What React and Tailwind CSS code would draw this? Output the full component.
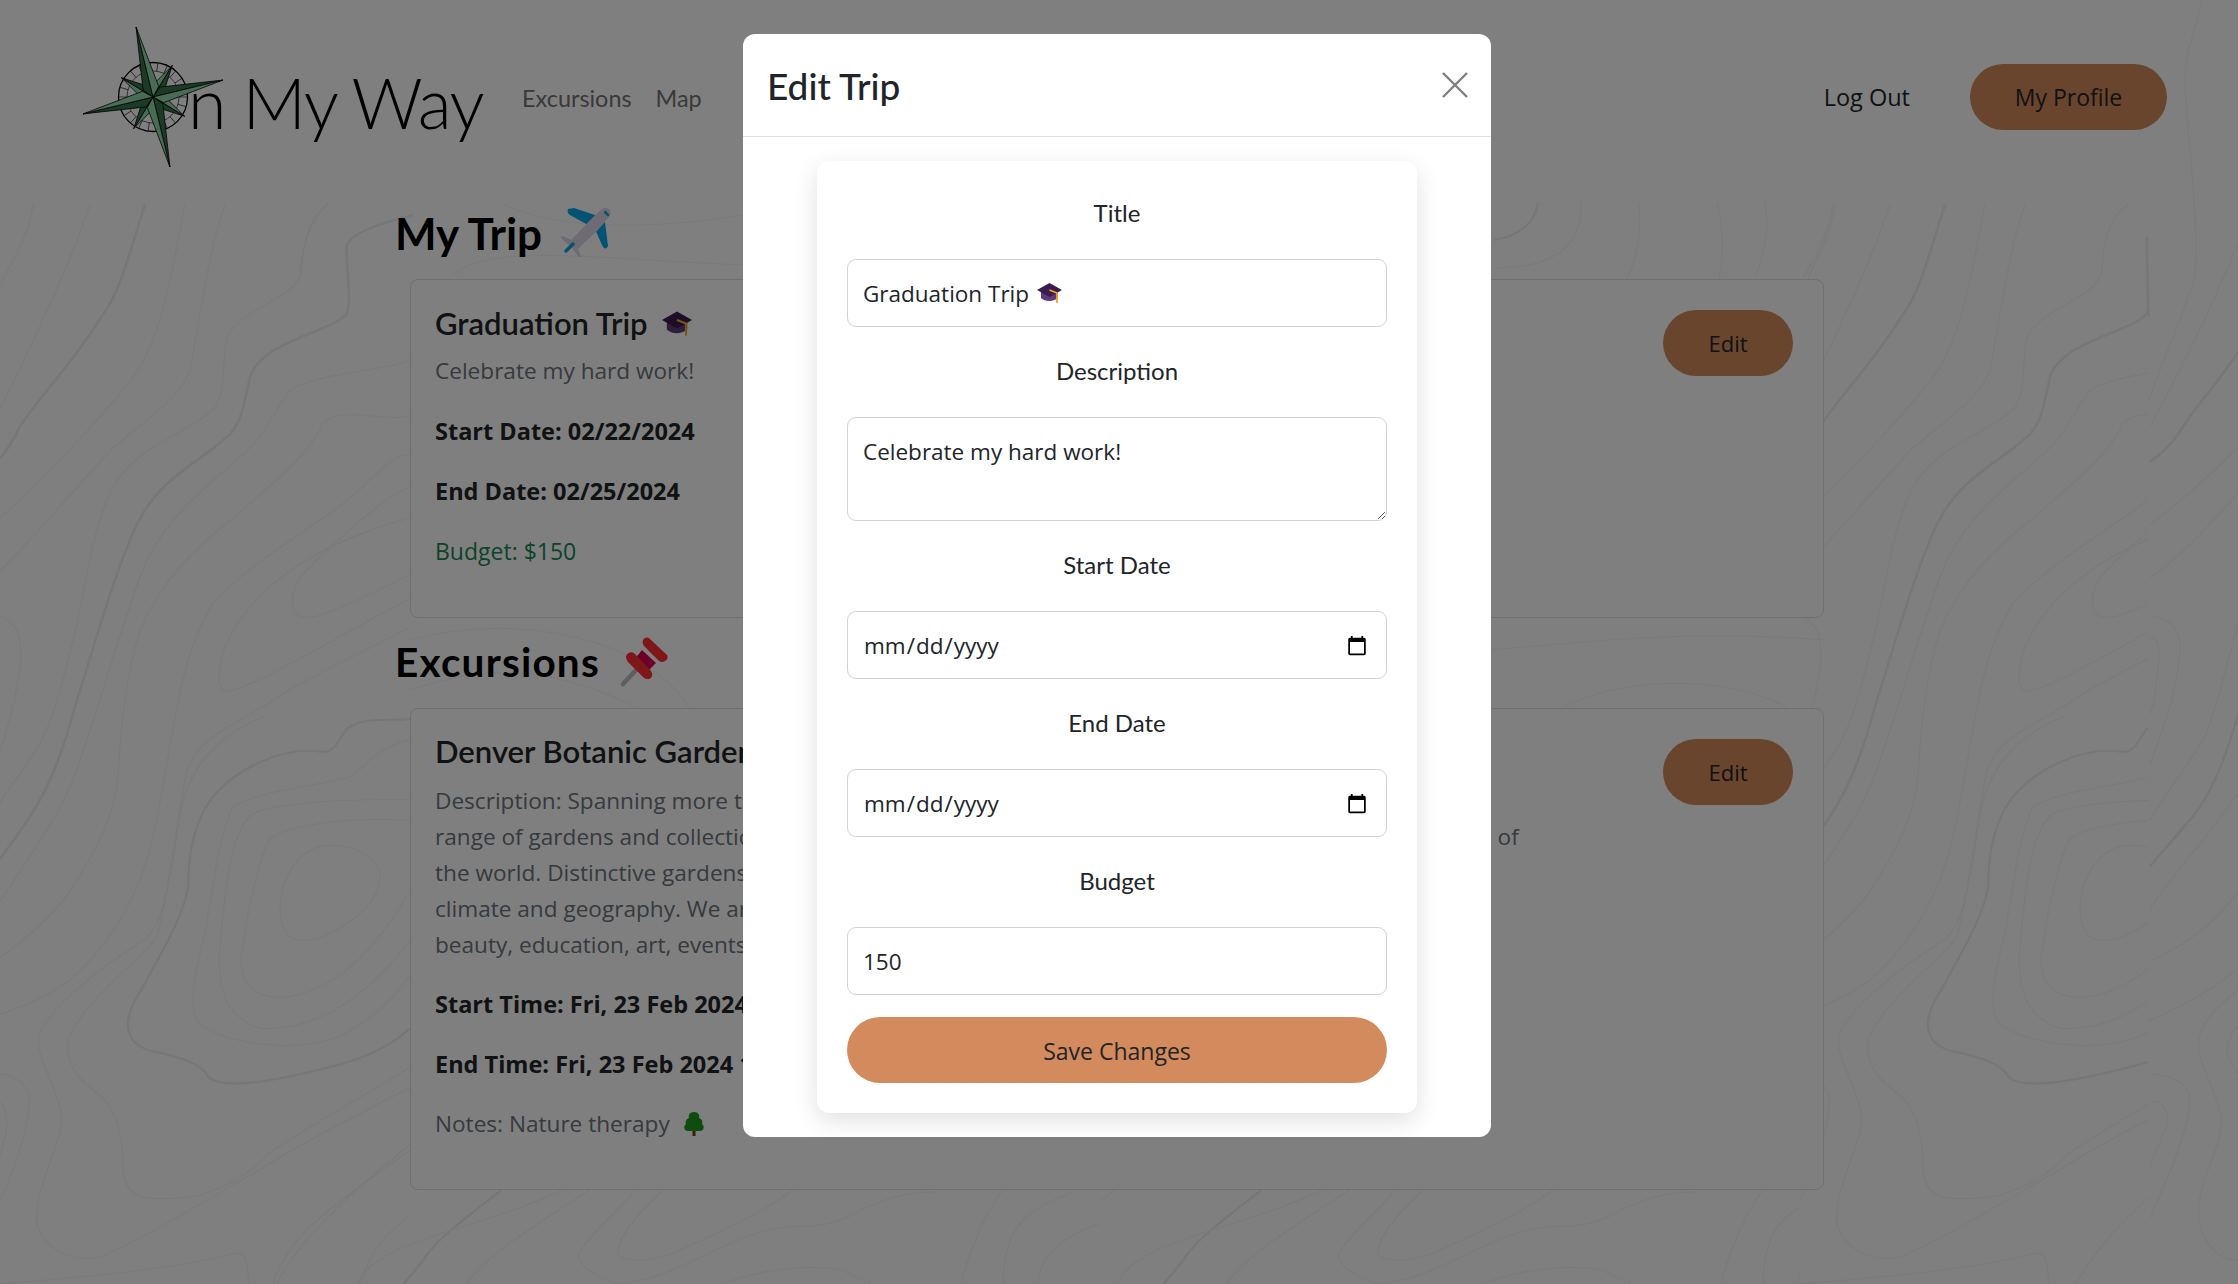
import React from "react";

const SANS = "font-['Open_Sans','Noto_Sans',sans-serif]";

const CONTOURS = [
  ["M0,150 C50,100 105,70 105,0", 1.2],
  ["M270,35 C210,120 90,240 0,325", 1.2],
  ["M435,35 C390,100 360,160 310,190 C220,260 130,300 60,350 C40,370 20,385 0,395", 2.6],
  ["M555,35 C520,120 490,220 400,280 C300,340 120,430 0,480", 1.2],
  ["M675,35 C620,110 600,200 570,270 C540,310 440,340 340,380 C220,440 100,510 0,555", 1.2],
  ["M985,35 C930,50 910,85 905,130 C890,170 720,180 680,225 C665,260 680,290 650,320 C600,350 460,370 380,410 C320,440 290,490 265,550 C230,640 170,760 120,800 C70,840 30,860 0,885", 1.2],
  ["M1240,50 C1150,60 1045,75 1040,95 C1040,130 1055,175 1040,190 C1000,215 780,230 750,280 C735,310 725,350 680,365 C620,395 480,420 410,490 C350,550 290,650 230,740 C180,830 130,880 60,925 C40,940 20,950 0,965", 2.6],
  ["M1230,255 C1180,270 1000,270 880,295 C840,310 810,350 770,370 C700,410 540,450 440,540 C370,620 310,730 250,810 C200,890 130,930 0,1025", 1.2],
  ["M1230,335 C1150,345 1030,320 970,345 C930,390 820,430 700,480 C590,520 480,570 420,640 C380,700 360,780 355,840 C350,900 280,960 210,1010 C150,1050 70,1080 0,1105", 1.2],
  ["M1230,390 C1180,390 1150,410 1100,430 C1000,480 780,530 640,600 C590,640 560,680 540,730 C500,820 480,900 450,950 C400,1040 300,1100 200,1140 C130,1165 60,1175 0,1185", 1.2],
  ["M1230,435 C1160,450 1060,490 950,540 C880,570 870,590 880,610 C900,635 980,620 1230,560", 1.2],
  ["M1230,480 C1000,510 800,560 700,640 C660,670 645,710 670,725 C720,735 1000,650 1230,595", 1.2],
  ["M1230,765 C1180,770 1090,760 1040,780 C1010,800 1000,815 960,812 C860,805 730,830 650,870 C590,900 565,950 565,1000 C560,1040 470,1110 400,1170 C370,1200 380,1225 440,1235 C520,1245 590,1250 620,1270 C640,1290 760,1285 900,1270 C1050,1255 1150,1240 1230,1205", 2.2],
  ["M1230,635 C1100,670 900,710 800,745 C680,780 600,790 560,840 C520,940 500,1030 470,1075 C420,1110 260,1160 205,1220 C195,1260 240,1280 300,1300 C350,1320 370,1360 370,1410 C380,1450 450,1450 560,1445 C650,1440 760,1410 800,1385 C900,1350 1100,1300 1230,1260", 1.2],
  ["M1230,795 C1100,810 1080,850 1030,850 C900,865 760,870 700,890 C650,930 630,1050 600,1100 C580,1140 565,1180 600,1200 C680,1225 850,1240 1000,1220 C1100,1200 1170,1170 1230,1130", 1.2],
  ["M1230,880 C1100,880 850,880 760,900 C700,920 680,980 660,1090 C650,1150 680,1190 780,1205 C950,1210 1100,1160 1230,1080", 1.2],
  ["M1230,910 C1100,905 900,910 810,935 C780,960 740,1040 725,1100 C715,1150 780,1165 870,1160 C1000,1150 1120,1100 1230,1010", 1.2],
  ["M990,945 C900,945 840,990 840,1040 C845,1090 930,1090 1030,1060 C1110,1035 1145,1010 1140,985 C1120,955 1050,945 990,945 Z", 1.2],
  ["M0,620 C40,625 65,640 62,680 C55,720 30,770 0,810", 1.2],
  ["M0,1270 C50,1270 90,1290 88,1310 C80,1360 40,1410 0,1450", 1.2],
  ["M0,1310 C20,1320 25,1340 15,1360 L0,1385", 1.2],
  ["M1230,1290 C1100,1320 900,1370 800,1400 C650,1440 450,1500 300,1530 C200,1540 120,1510 110,1480 C105,1430 185,1370 185,1330 C175,1290 110,1250 115,1220 C130,1180 300,1120 430,1080 C490,1060 510,1000 540,900 C570,830 650,790 800,760", 1.2],
  ["M830,1568 C900,1500 1100,1420 1230,1370", 1.2],
  ["M1080,1568 C1120,1510 1180,1490 1230,1470", 1.2],
  ["M0,1568 C200,1560 500,1550 700,1525 C740,1520 745,1540 745,1568", 1.2],
];

const RIGHT_EDGE = [
  ["M1254,90 C1150,210 1070,280 990,350", 1.2],
  ["M1254,245 C1190,290 1130,320 1090,350 C1050,380 1020,390 990,400", 2.6],
  ["M1254,380 C1150,430 1070,460 990,490", 1.2],
  ["M1254,445 C1150,500 1070,540 990,565", 1.2],
  ["M990,620 C1050,620 1085,640 1080,670 C1070,730 1030,780 990,830", 1.2],
  ["M990,650 C1015,650 1020,665 1015,685 C1010,720 1005,740 990,760", 1.2],
  ["M1254,630 C1200,730 1170,780 1150,795 C1090,840 1040,870 990,910", 1.2],
  ["M1254,760 C1200,850 1150,890 1090,920 L990,975", 2.6],
  ["M1254,870 C1190,920 1100,960 990,1035", 1.2],
  ["M1254,1010 C1180,1060 1100,1085 990,1110", 1.2],
  ["M1254,1120 C1180,1150 1080,1175 985,1195", 1.2],
  ["M1254,1150 C1180,1180 1130,1200 1135,1235 C1150,1270 1205,1310 1205,1340 C1200,1380 1135,1420 1135,1470 C1140,1510 1200,1535 1254,1535", 1.2],
  ["M1254,1200 C1230,1215 1215,1230 1225,1245 L1254,1270", 1.2],
  ["M990,1270 C1060,1270 1110,1285 1110,1310 C1100,1360 1040,1420 990,1475", 1.2],
  ["M990,1310 C1030,1305 1050,1325 1040,1345 L990,1400", 1.2],
];

const BOTTOM = [
  ["M585,60 C500,190 450,260 420,340 C400,400 390,440 390,462", 1.2],
  ["M715,180 C660,270 620,330 600,400 L575,462", 2.4],
  ["M800,180 C700,290 530,330 510,462", 1.2],
  ["M840,180 C760,290 690,380 665,462", 1.2],
  ["M905,180 C880,250 830,330 825,380 C830,420 860,450 880,462", 1.2],
  ["M945,180 C910,250 880,320 880,370 C890,400 920,395 960,370 C1010,320 1080,260 1130,180", 1.2],
  ["M1335,185 C1290,190 1260,200 1210,260 C1190,280 1170,290 1130,290 C1090,290 1040,340 980,400 C940,440 910,460 880,460", 1.2],
  ["M1430,180 C1400,260 1380,380 1370,462", 1.2],
  ["M1540,180 C1460,230 1430,300 1430,462", 1.2],
  ["M1568,280 C1500,330 1480,400 1480,462", 1.2],
  ["M1030,462 C1080,420 1150,400 1200,420 L1240,462", 1.2],
];

const PAGE_LINES = [
  ["M2202,0 C2195,30 2185,55 2185,80 C2185,120 2200,220 2195,275 C2190,300 2170,340 2149,400", 1.2],
  ["M2147,237 C2148,270 2147,300 2149,317", 2.4],
  ["M505,205 C560,230 650,230 743,215", 1.2],
  ["M450,279 C480,240 600,260 743,265", 1.2],
  ["M328,203 C310,220 300,250 300,279", 1.2],
  ["M410,640 C520,610 650,640 690,709", 1.2],
  ["M410,690 C500,660 560,670 640,709", 1.2],
  ["M1538,203 C1535,225 1515,237 1494,240", 2.2],
  ["M1581,203 C1582,250 1550,268 1494,268", 1.2],
  ["M1639,203 C1642,235 1636,260 1627,279", 1.2],
  ["M1717,203 C1725,235 1723,260 1719,279", 1.2],
  ["M1765,203 C1770,230 1762,260 1755,279", 1.2],
  ["M1835,203 C1830,240 1815,260 1808,279", 1.2],
  ["M1491,650 C1600,640 1700,630 1824,640", 1.2],
  ["M1560,709 C1610,680 1720,670 1790,709", 1.2],
];

function Lines({ items, transform }) {
  return (
    <g transform={transform}>
      {items.map(([d, w], i) => (
        <path key={i} d={d} fill="none" stroke={w > 2 ? "#ecf0ec" : "#f3f5f3"} strokeWidth={w} vectorEffect="non-scaling-stroke" />
      ))}
    </g>
  );
}

function Topography() {
  return (
    <svg className="absolute inset-0" width="2238" height="1284" viewBox="0 0 2238 1284">
      <defs>
        <clipPath id="left"><rect x="0" y="203" width="2148" height="1081" /></clipPath>
        <clipPath id="mid"><rect x="1100" y="1190" width="700" height="94" /></clipPath>
      </defs>
      <g clipPath="url(#left)">
        <Lines items={CONTOURS} transform="translate(0,180) scale(0.3333,0.704)" />
        <Lines items={CONTOURS} transform="translate(1800,180) scale(0.3333,0.704)" />
      </g>
      <Lines items={RIGHT_EDGE} transform="translate(1820,180) scale(0.3333,0.704)" />
      <Lines items={BOTTOM} transform="translate(0,1130) scale(0.7015,0.3333)" />
      <g clipPath="url(#mid)">
        <Lines items={BOTTOM} transform="translate(760,1130) scale(0.7015,0.3333)" />
      </g>
      <Lines items={PAGE_LINES} />
    </svg>
  );
}

function Compass() {
  const long = [0, 90, 180, 270];
  const short = [45, 135, 225, 315];
  const ticks = Array.from({ length: 22 }, (_, i) => (i * 360) / 22);
  return (
    <svg width="146" height="146" viewBox="-73 -73 146 146" className="shrink-0">
      <circle r="34.5" fill="none" stroke="#000" strokeWidth="1.3" />
      <circle r="26" fill="none" stroke="#222" strokeWidth="0.7" />
      {ticks.map((a) => (
        <line key={a} x1="26" y1="0" x2="34" y2="0" stroke="#222" strokeWidth="0.7" transform={`rotate(${a})`} />
      ))}
      <g transform="rotate(-13.6)" stroke="#000" strokeWidth="0.7" strokeLinejoin="round">
        {short.map((a) => (
          <g key={a} transform={`rotate(${a})`}>
            <polygon points="0,-37 0,0 -7,-8" fill="#92d8a8" />
            <polygon points="0,-37 0,0 7,-8" fill="#3a744c" />
          </g>
        ))}
        {long.map((a) => (
          <g key={a} transform={`rotate(${a})`}>
            <polygon points="0,-72 0,0 -8,-9" fill="#3a744c" />
            <polygon points="0,-72 0,0 8,-9" fill="#92d8a8" />
          </g>
        ))}
      </g>
    </svg>
  );
}

function Plane() {
  return (
    <svg width="54" height="52" viewBox="0 0 54 52" className="shrink-0">
      <path d="M8,2 C7,5 8,7 10,8 L28,18 L38,9 L14,1 Z" fill="#0aa6e6" />
      <path d="M34,20 L42,38 C44,43 47,42 48,39 L45,15 Z" fill="#0aa6e6" />
      <path d="M42,2 C47,-1 52,3 50,8 C47,13 38,24 24,36 L18,42 L21,49 C21,51 19,50 18,49 L12,41 L2,32 C0,30 1,29 3,29 L11,33 L18,26 C26,17 36,7 42,2 Z" fill="#dcd6e8" />
      <path d="M45,5 L48,8" stroke="#0aa6e6" strokeWidth="2.5" strokeLinecap="round" />
      <path d="M6,44 L13,37" stroke="#0aa6e6" strokeWidth="3.5" strokeLinecap="round" />
    </svg>
  );
}

function Pin() {
  return (
    <svg width="50" height="52" viewBox="0 0 50 52" className="shrink-0">
      <path d="M3,48 L17,33" stroke="#bcbcbc" strokeWidth="4.5" strokeLinecap="round" />
      <polygon points="22,14 36,27 28,35 14,24" fill="#d9004f" />
      <path d="M6,20 C8,16 12,15 15,18 L31,35 C34,39 31,44 27,43 C25,43 24,42 22,40 L9,27 C7,25 6,23 6,20 Z" fill="#ff2f33" />
      <path d="M23,4 C25,1 28,1 30,3 L47,19 C49,22 46,26 42,26 C40,26 39,25 37,23 L25,11 C23,9 22,7 23,4 Z" fill="#ff2f33" />
    </svg>
  );
}

function Cap({ className = "", size = 25 }) {
  return (
    <svg width={size} height={size} viewBox="0 0 25 25" className={className}>
      <path d="M4,12 L4,18 C8,22 16,22 21,18 L21,12 Z" fill="#5e3a78" />
      <polygon points="12.5,3 25,10 12.5,17 0,10" fill="#3b1b52" />
      <path d="M12.5,10 L20,13 L20,23" fill="none" stroke="#f6a623" strokeWidth="1.8" />
    </svg>
  );
}

function Tree() {
  return (
    <svg width="22" height="24" viewBox="0 0 22 24" className="shrink-0">
      <rect x="9.5" y="16" width="3" height="8" fill="#7a3d1d" />
      <path d="M11,0 C15,0 17,3 16,6 C19,7 20,10 19,12 C22,14 21,19 17,19 L5,19 C1,19 0,14 3,12 C2,10 3,7 6,6 C5,3 7,0 11,0 Z" fill="#1c9a1f" />
    </svg>
  );
}

function TripCard({ className, children }) {
  return (
    <section className={`relative ml-[15px] w-[1414px] rounded-[8px] border border-[#dfdfdf] bg-white pl-[24px] ${className}`}>
      {children}
      <button className={`absolute right-[30px] top-[30px] h-[66px] w-[130px] rounded-full bg-[#d38a5c] text-[22px] text-[#212529] ${SANS}`}>
        Edit
      </button>
    </section>
  );
}

function Field({ label, mb = "mb-[28px]", children }) {
  return (
    <>
      <label className={`block text-center font-['Lato',sans-serif] text-[24px] leading-[36px] text-[#212529] ${mb}`}>{label}</label>
      {children}
    </>
  );
}

const INPUT = `block w-full h-[68px] rounded-[9px] border border-[#ced4da] bg-white px-[15px] text-[22.5px] text-[#212529] outline-none ${SANS}`;
const BODY = "text-[22.6px] leading-[36px] text-[#6c757d]";
const STRONG = "mt-[24px] whitespace-nowrap text-[23.5px] font-bold leading-[36px] text-[#212529]";

export default function App() {
  return (
    <div className={`relative h-[1284px] w-[2238px] overflow-hidden bg-white ${SANS}`}>
      <Topography />
      <div className="relative">
        <header className="flex h-[193px] items-center pl-[80px] pr-[71px]">
          <Compass />
          <span className="-ml-[38px] mt-[11px] whitespace-nowrap font-['Lato',sans-serif] text-[70px] font-light leading-none tracking-[-1.5px] text-black">n My Way</span>
          <nav className="ml-[39px] mt-[4px] flex gap-[24px] font-['Lato',sans-serif] text-[23.4px] text-[#737373]">
            <a>Excursions</a>
            <a>Map</a>
          </nav>
          <a className="ml-auto mr-[60px] pt-[2px] text-[23.5px] text-[#212529]">Log Out</a>
          <button className="h-[66px] w-[197px] rounded-full bg-[#d38a5c] pt-[1px] text-[23px] text-[#212529]">My Profile</button>
        </header>

        <main className="pl-[395px]">
          <h1 className="-mt-[2px] flex h-[88px] items-center gap-[18px] pb-[5px] font-['Lato',sans-serif] text-[44px] font-bold leading-none text-black">
            My Trip <Plane />
          </h1>
          <TripCard className="h-[339px] pt-[23px]">
            <h2 className="flex items-center gap-[14px] font-['Lato',sans-serif] text-[31px] font-semibold leading-[40px] text-[#212529]">
              Graduation Trip <Cap size={30} />
            </h2>
            <p className={`mt-[10px] ${BODY}`}>Celebrate my hard work!</p>
            <p className={STRONG}>Start Date: 02/22/2024</p>
            <p className={STRONG}>End Date: 02/25/2024</p>
            <p className="mt-[24px] text-[23px] leading-[36px] text-[#198754]">Budget: $150</p>
          </TripCard>

          <h1 className="flex h-[90px] items-center gap-[20px] pb-[2px] font-['Lato',sans-serif] text-[40.5px] font-bold leading-none tracking-[1.2px] text-black">
            Excursions <Pin />
          </h1>
          <TripCard className="h-[482px] pt-[22px]">
            <h2 className="font-['Lato',sans-serif] text-[31px] font-semibold leading-[40px] text-[#212529]">Denver Botanic Gardens</h2>
            <p className={`mt-[12px] whitespace-nowrap ${BODY}`}>
              Description: Spanning more than 24 acres, Denver Botanic Gardens features a diverse<br />
              range of gardens and collections showcasing plants from every remote corner of the globe and parts of<br />
              the world. Distinctive gardens reflect the unique beauty of Colorado and its<br />
              climate and geography. We are a place of<br />
              beauty, education, art, events and quiet reflection.
            </p>
            <p className={`${STRONG} !mt-[23px]`}>Start Time: Fri, 23 Feb 2024 16:00:00 GMT</p>
            <p className={STRONG}>End Time: Fri, 23 Feb 2024 18:00:00 GMT</p>
            <p className={`mt-[24px] flex items-center gap-[13px] ${BODY}`}>Notes: Nature therapy <Tree /></p>
          </TripCard>
        </main>
      </div>

      <div className="absolute inset-0 bg-black/50" />

      <div className="absolute left-[743px] top-[34px] h-[1103px] w-[748px] rounded-[12px] bg-white">
        <div className="flex h-[103px] items-center justify-between border-b border-[#dee2e6] pl-[24px] pr-[23px]">
          <h3 className="pt-[1px] font-['Lato',sans-serif] text-[37px] font-medium leading-none text-[#212529]">Edit Trip</h3>
          <svg width="26" height="26" viewBox="0 0 26 26">
            <path d="M1,1 L25,25 M25,1 L1,25" stroke="#7f7f7f" strokeWidth="2.4" fill="none" />
          </svg>
        </div>
        <form className="ml-[74px] mt-[24px] h-[952px] w-[600px] rounded-[12px] bg-white px-[30px] pt-[34px] shadow-[0_8px_24px_rgba(0,0,0,0.12)]">
          <Field label="Title">
            <div className="relative mb-[26px]">
              <input className={INPUT} readOnly value="Graduation Trip" />
              <Cap className="absolute left-[190px] top-[21px]" />
            </div>
          </Field>
          <Field label="Description">
            <textarea className={`${INPUT} !h-[104px] mb-[26px] !py-[17px] leading-[33px]`} readOnly value="Celebrate my hard work!" />
          </Field>
          <Field label="Start Date">
            <input type="date" className={`${INPUT} mb-[26px] pt-[2px] pr-[16px]`} />
          </Field>
          <Field label="End Date">
            <input type="date" className={`${INPUT} mb-[26px] pt-[2px] pr-[16px]`} />
          </Field>
          <Field label="Budget">
            <input type="number" className={`${INPUT} mb-[22px]`} readOnly value="150" />
          </Field>
          <button type="button" className="h-[66px] w-full rounded-full bg-[#d38a5c] pt-[2px] text-[23px] text-[#212529]">Save Changes</button>
        </form>
      </div>
    </div>
  );
}
